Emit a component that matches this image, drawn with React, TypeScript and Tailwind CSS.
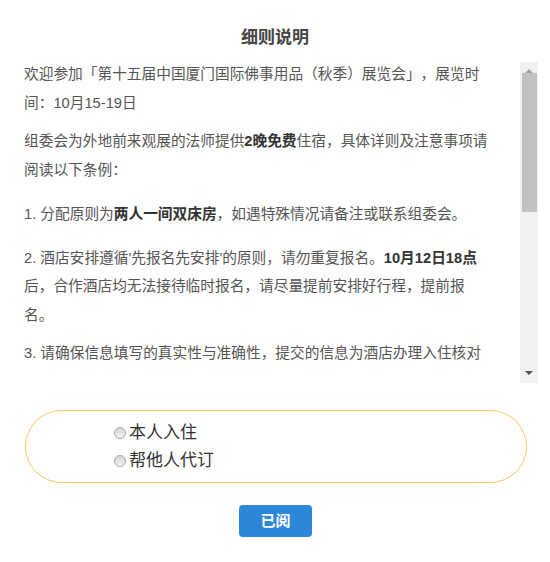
import { useState } from "react";

const font = "font-['Liberation_Sans','Noto_Sans_CJK_SC',sans-serif]";

const Radio = ({ checked }: { checked: boolean }) => (
  <span className="flex h-[12px] w-[12px] items-center justify-center rounded-full border border-[#a9a9a9] bg-gradient-to-b from-[#d6d6d6] to-[#f4f4f4]">
    {checked && <span className="h-[6px] w-[6px] rounded-full bg-[#333]" />}
  </span>
);

const App = () => {
  const [who, setWho] = useState<string>("");

  return (
    <div className={`h-[562px] w-[550px] bg-white ${font}`}>
      <div className="pt-[26px] text-center text-[17px] font-bold leading-[24px] text-[#444]">
        细则说明
      </div>

      <div className="ml-[24px] mt-[10px] flex h-[323px] w-[514px] items-start">
        <div className="h-[310px] flex-1 overflow-hidden pr-[29px] text-[14.7px] leading-[28.5px] text-[#555] [text-spacing-trim:space-all]">
          <p className="mb-[10px]">
            欢迎参加「第十五届中国厦门国际佛事用品（秋季）展览会」，展览时间：10月15-19日
          </p>
          <p className="mb-[16px]">
            组委会为外地前来观展的法师提供<b className="text-[#333]">2晚免费</b>住宿，具体详则及注意事项请阅读以下条例：
          </p>
          <p className="mb-[15px]">
            1. 分配原则为<b className="text-[#333]">两人一间双床房</b>，如遇特殊情况请备注或联系组委会。
          </p>
          <p className="mb-[10px]">
            2. 酒店安排遵循'先报名先安排'的原则，请勿重复报名。
            <b className="text-[#333]">10月12日18点</b>
            后，合作酒店均无法接待临时报名，请尽量提前安排好行程，提前报名。
          </p>
          <p>
            3. 请确保信息填写的真实性与准确性，提交的信息为酒店办理入住核对的依据。
          </p>
        </div>

        {/* scrollbar */}
        <div className="mt-[2px] flex h-[321px] w-[18px] flex-col items-center bg-[#f1f1f1]">
          <div className="flex h-[11px] items-end justify-center">
            <div className="h-0 w-0 border-x-[4px] border-b-[4px] border-x-transparent border-b-[#a3a3a3]" />
          </div>
          <div className="h-[139px] w-[15px] bg-[#c1c1c1]" />
          <div className="flex-1" />
          <div className="mb-[8px] h-0 w-0 border-x-[4px] border-t-[4px] border-x-transparent border-t-[#505050]" />
        </div>
      </div>

      <div className="ml-[25px] mt-[27px] flex h-[73px] w-[502px] flex-col justify-center gap-[6px] rounded-full border border-[#f6c65e] pl-[88px]">
        {["本人入住", "帮他人代订"].map((label) => (
          <label
            key={label}
            className="flex cursor-pointer items-center gap-[3px] text-[17px] leading-[22px] text-[#333]"
            onClick={() => setWho(label)}
          >
            <Radio checked={who === label} />
            {label}
          </label>
        ))}
      </div>

      <div className="mt-[22px] flex justify-center">
        <button className="ml-[1px] h-[32px] w-[73px] rounded-[4px] bg-[#2e86d8] text-[15px] font-bold text-white">
          已阅
        </button>
      </div>
    </div>
  );
};

export default App;
